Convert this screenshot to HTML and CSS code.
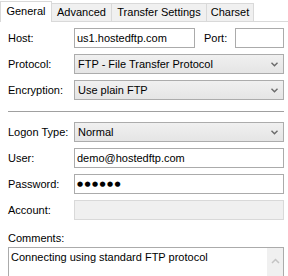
FILE: index.html
```html
<!DOCTYPE html>
<html>
<head>
<meta charset="utf-8">
<link rel="stylesheet" href="styles.css">
</head>
<body>
<div class="tabs">
  <div class="tab active w-general">General</div>
  <div class="tab w-advanced">Advanced</div>
  <div class="tab w-transfer">Transfer Settings</div>
  <div class="tab w-charset">Charset</div>
</div>
<div class="form">
  <div class="row">
    <div class="lbl">Host:</div>
    <div class="field host">us1.hostedftp.com</div>
    <div class="lbl port-lbl">Port:</div>
    <div class="field port"></div>
  </div>
  <div class="row">
    <div class="lbl">Protocol:</div>
    <div class="select"><span class="val">FTP - File Transfer Protocol</span><svg class="chev" width="7" height="5" viewBox="0 0 7 5"><polyline points="0.5,0.8 3.5,3.8 6.5,0.8" fill="none" stroke="#6a6a6a" stroke-width="1.4"/></svg></div>
  </div>
  <div class="row">
    <div class="lbl">Encryption:</div>
    <div class="select"><span class="val">Use plain FTP</span><svg class="chev" width="7" height="5" viewBox="0 0 7 5"><polyline points="0.5,0.8 3.5,3.8 6.5,0.8" fill="none" stroke="#6a6a6a" stroke-width="1.4"/></svg></div>
  </div>
  <div class="sep"></div>
  <div class="row">
    <div class="lbl">Logon Type:</div>
    <div class="select"><span class="val">Normal</span><svg class="chev" width="7" height="5" viewBox="0 0 7 5"><polyline points="0.5,0.8 3.5,3.8 6.5,0.8" fill="none" stroke="#6a6a6a" stroke-width="1.4"/></svg></div>
  </div>
  <div class="row">
    <div class="lbl">User:</div>
    <div class="field">demo@hostedftp.com</div>
  </div>
  <div class="row">
    <div class="lbl">Password:</div>
    <div class="field pw">●●●●●●</div>
  </div>
  <div class="row">
    <div class="lbl">Account:</div>
    <div class="field disabled"></div>
  </div>
  <div class="comments-lbl">Comments:</div>
  <div class="textarea">
    <div class="ta-text">Connecting using standard FTP protocol</div>
    <div class="scroll"><svg width="9" height="6" viewBox="0 0 9 6"><polyline points="1,5 4.5,1.5 8,5" fill="none" stroke="#c4c4c4" stroke-width="1.5"/></svg></div>
  </div>
</div>
</body>
</html>
```

FILE: styles.css
```css
html, body {
  margin: 0;
  padding: 0;
  background: #ffffff;
}
body {
  width: 288px;
  height: 276px;
  overflow: hidden;
  font-family: "Liberation Sans", Arial, sans-serif;
  font-size: 11px;
  color: #000;
}
.tabs {
  display: flex;
  align-items: flex-end;
  height: 22px;
  box-sizing: border-box;
  border-bottom: 1px solid #d9d9d9;
}
.tab {
  box-sizing: border-box;
  height: 18px;
  border: 1px solid #d9d9d9;
  border-bottom: 0;
  background: #f0f0f0;
  margin-left: -1px;
  text-align: center;
  line-height: 17px;
  white-space: nowrap;
}
.tab.active {
  height: 21px;
  margin-bottom: -1px;
  margin-left: 0;
  background: #fff;
  line-height: 19px;
  position: relative;
  z-index: 1;
}
.w-general { width: 52px; }
.w-advanced { width: 61px; }
.w-transfer { width: 96px; }
.w-charset { width: 48px; }

.form {
  padding: 6px 4px 0 8px;
  display: flex;
  flex-direction: column;
  gap: 6px;
}
.row {
  display: flex;
  align-items: center;
  height: 20px;
}
.lbl {
  width: 66px;
  flex: none;
}
.field {
  flex: 1;
  height: 20px;
  box-sizing: border-box;
  border: 1px solid #ababab;
  background: #fff;
  padding-left: 2px;
  line-height: 18px;
  white-space: nowrap;
}
.field.host {
  flex: none;
  width: 121px;
}
.lbl.port-lbl {
  width: 31px;
  margin-left: 9px;
}
.field.port {
  flex: none;
  width: 49px;
}
.field.pw {
  font-family: "DejaVu Sans", sans-serif;
  font-size: 7px;
  letter-spacing: 1.4px;
}
.field.disabled {
  background: #f0f0f0;
  border-color: #d9d9d9;
}
.select {
  flex: 1;
  height: 20px;
  box-sizing: border-box;
  border: 1px solid #acacac;
  background: linear-gradient(#f0f0f0, #e5e5e5);
  display: flex;
  align-items: center;
  padding: 0 5px 0 3px;
}
.select .val {
  flex: 1;
}
.chev {
  display: block;
}
.sep {
  height: 1px;
  background: #a0a0a0;
  margin: 5px 0 4px 0;
}
.comments-lbl {
  margin-top: 5px;
  line-height: 14px;
}
.textarea {
  margin-top: -4px;
  height: 40px;
  box-sizing: border-box;
  border: 1px solid #ababab;
  display: flex;
}
.ta-text {
  flex: 1;
  padding: 2px 0 0 2px;
  line-height: 15px;
}
.scroll {
  width: 16px;
  background: #f0f0f0;
  display: flex;
  justify-content: center;
  padding-top: 10px;
  box-sizing: border-box;
}
.scroll svg {
  display: block;
}
```
